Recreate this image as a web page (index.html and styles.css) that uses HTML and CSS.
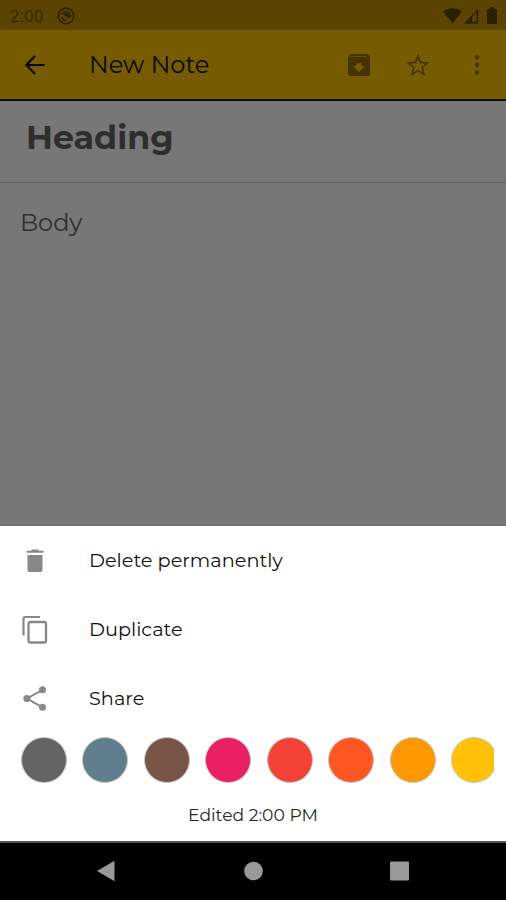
FILE: index.html
```html
<!DOCTYPE html>
<html lang="en">
<head>
<meta charset="utf-8">
<title>New Note</title>
<link rel="stylesheet" href="styles.css">
</head>
<body>
<div class="screen">
  <div class="status">
    <span class="clock">2:00</span>
    <svg class="status-app" viewBox="0 0 18 18"><circle cx="9" cy="9" r="7.700" fill="none" stroke="currentColor" stroke-width="1.600"/><path d="M5 7.500A4.400 4.400 0 0 1 13.200 10.500M4.800 10.300A4.400 4.400 0 0 0 10 13.200" fill="none" stroke="currentColor" stroke-width="1.300"/><path d="M6.500 7.800a3.200 3.200 0 0 1 5.500 3.700L9.500 9.500z" fill="currentColor"/></svg>
    <div class="status-right">
      <svg width="19" height="16" viewBox="0 0 19 16"><path d="M0 3.600C5.500-1 13.500-1 19 3.600L9.500 15.500z" fill="currentColor"/></svg>
      <svg width="15" height="16" viewBox="0 0 15 16"><path d="M14.200.5V15.500H0z" fill="currentColor"/><path d="M12.700 4v10H8V8.700z" class="signal-gap"/></svg>
      <svg class="battery" width="10" height="17" viewBox="0 0 10 17"><path d="M3 0h4v2h3v15H0V2h3z" fill="currentColor"/></svg>
    </div>
  </div>
  <header class="appbar">
    <svg class="back" viewBox="0 0 20 20"><path d="M19.500 10H1.700M10 1L1.300 10l8.700 9" fill="none" stroke="currentColor" stroke-width="2.100"/></svg>
    <h1 class="title">New Note</h1>
    <div class="actions">
      <svg class="archive" viewBox="0 0 22 22"><path fill-rule="evenodd" d="M2.500 0h17L22 3v16.500a2.500 2.500 0 0 1-2.500 2.500h-17A2.500 2.500 0 0 1 0 19.500V3zM2.800 2.800h16.400V2H2.800zM11 18l6-6h-3.300V9.200H8.300V12H5z" fill="currentColor"/></svg>
      <svg class="star" viewBox="0 0 22 22"><path d="M11 2l2.500 6.400 7.200.5-5.500 4.600 1.700 6.800L11 16.600l-5.900 3.700 1.700-6.800L1.300 8.900l7.200-.5z" fill="none" stroke="currentColor" stroke-width="1.600"/></svg>
      <svg class="more" viewBox="0 0 6 20"><circle cx="3" cy="2.500" r="2.200" fill="currentColor"/><circle cx="3" cy="10" r="2.200" fill="currentColor"/><circle cx="3" cy="17.500" r="2.200" fill="currentColor"/></svg>
    </div>
  </header>
  <main class="note">
    <div class="heading">Heading</div>
    <div class="body-text">Body</div>
  </main>
  <section class="sheet">
    <div class="row">
      <svg class="row-icon" viewBox="0 0 28 28"><path d="M6.500 8h15v15a2 2 0 0 1-2 2h-11a2 2 0 0 1-2-2zM5.500 3.700h4.500l1-1.200h6l1 1.200h4.500V5.700h-17z" fill="currentColor"/></svg>
      <span class="label">Delete permanently</span>
    </div>
    <div class="row">
      <svg class="row-icon" viewBox="0 0 28 28"><path d="M2.500 19.500V2.700A1.700 1.700 0 0 1 4.200 1H19" fill="none" stroke="currentColor" stroke-width="2.200"/><rect x="7.500" y="6" width="17.500" height="20.500" rx="2" fill="none" stroke="currentColor" stroke-width="2.300"/></svg>
      <span class="label">Duplicate</span>
    </div>
    <div class="row">
      <svg class="row-icon" viewBox="0 0 28 28"><path d="M21.500 4.800L6 13.500 21.500 22.300" fill="none" stroke="currentColor" stroke-width="2"/><circle cx="21.500" cy="4.800" r="3.500" fill="currentColor"/><circle cx="6" cy="13.500" r="3.600" fill="currentColor"/><circle cx="21.500" cy="22.300" r="3.500" fill="currentColor"/></svg>
      <span class="label">Share</span>
    </div>
    <div class="colors">
      <span class="dot grey"></span><span class="dot blue"></span><span class="dot brown"></span><span class="dot pink"></span><span class="dot red"></span><span class="dot deep-orange"></span><span class="dot orange"></span><span class="dot amber"></span>
    </div>
    <div class="edited">Edited 2:00 PM</div>
  </section>
  <nav class="navbar">
    <svg viewBox="0 0 20 22"><path d="M17.500.8v20.400L0 11z" fill="currentColor"/></svg>
    <svg viewBox="0 0 20 22"><circle cx="10.500" cy="11" r="9.300" fill="currentColor"/></svg>
    <svg viewBox="0 0 20 22"><rect x="1" y="1.500" width="19" height="19" rx="1.200" fill="currentColor"/></svg>
  </nav>
</div>
</body>
</html>
```
FILE: styles.css
```css
* { box-sizing: border-box; }
body { margin: 0; font-family: Montserrat, Inter, sans-serif; }
svg { display: block; flex: none; }
.screen { width: 506px; height: 900px; display: flex; flex-direction: column; overflow: hidden; background: #777; }
.status { height: 30px; flex: none; display: flex; align-items: center; padding: 1px 9px 0 10px; background: #5b4400; color: #2a2000; }
.clock { width: 47px; font: 17px/20px Roboto, sans-serif; letter-spacing: .2px; color: #352800; }
.status-app { width: 18px; height: 18px; }
.status-right { margin-left: auto; display: flex; align-items: center; gap: 2px; }
.battery { margin-left: 6px; }
.signal-gap { fill: #5b4400; }
.appbar { height: 71px; flex: none; display: flex; align-items: center; padding: 0 26px 0 25px; background: #775b00; border-bottom: 2px solid #120e00; color: #0a0800; }
.back { width: 20px; height: 20px; }
.title { margin: 0 0 0 44px; font-size: 24.200px; line-height: 30px; font-weight: 400; white-space: nowrap; }
.actions { margin-left: auto; display: flex; align-items: center; color: #443400; }
.archive { width: 22px; height: 22px; }
.star { width: 22px; height: 22px; margin-left: 37px; }
.more { width: 6px; height: 20px; margin-left: 45px; }
.note { height: 425px; flex: none; border-bottom: 1px solid #6b6b6b; color: #303030; }
.heading { height: 82px; padding: 13px 26px 0; border-bottom: 1px solid #656565; font-size: 33.300px; line-height: 46px; font-weight: 700; color: #2e2e2e; }
.body-text { padding: 25px 20px; font-size: 24px; line-height: 30px; }
.sheet { height: 315px; flex: none; background: #fff; }
.row { height: 69px; display: flex; align-items: center; padding-left: 21px; color: #888; }
.row-icon { width: 28px; height: 28px; }
.label { margin-left: 40px; padding-bottom: 2px; font-size: 19.300px; line-height: 28px; color: #111; }
.colors { height: 54px; display: flex; gap: 15.500px; padding-top: 4px; margin: 0 12px 0 20.500px; overflow: hidden; }
.dot { width: 46px; height: 46px; flex: none; border: 1px solid #c4c4c4; border-radius: 50%; }
.grey { background: #646464; }
.blue { background: #607d8b; }
.brown { background: #795548; }
.pink { background: #e91e63; }
.red { background: #f44336; }
.deep-orange { background: #ff5722; }
.orange { background: #ff9800; }
.amber { background: #ffc107; }
.edited { margin-top: 17px; text-align: center; font-size: 17.200px; line-height: 22px; color: #282828; }
.navbar { height: 59px; flex: none; display: flex; align-items: center; justify-content: center; gap: 126px; padding-bottom: 2px; background: #000; color: #999; border-top: 2px solid #555; }
.navbar svg { width: 20px; height: 22px; }
```
